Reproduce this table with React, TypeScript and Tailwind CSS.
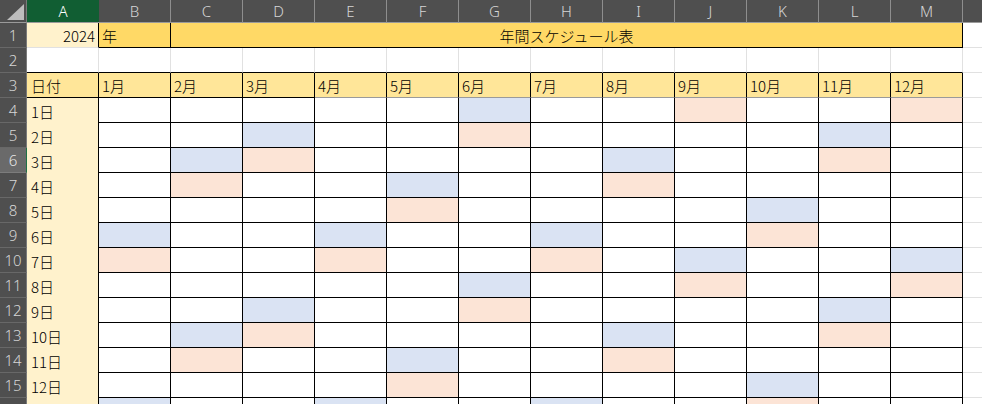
import React from "react";

const letters = ["A", "B", "C", "D", "E", "F", "G", "H", "I", "J", "K", "L", "M"];
const months = Array.from({ length: 12 }, (_, i) => `${i + 1}月`);
const days = Array.from({ length: 13 }, (_, i) => i + 1);

const jp = "font-['Noto_Sans_CJK_JP','Noto_Sans',sans-serif] font-light text-[15px] leading-none text-black";

const RowHead = ({ n, active }: { n: number; active?: boolean }) => (
  <div
    className={`flex items-center justify-center border-b text-[15px] font-['Noto_Sans','Liberation_Sans',sans-serif] font-light ${
      active
        ? "bg-[#6a6a6a] border-b-[#7c7c7c] border-r border-r-[#1e7145] text-[#e8e8e8]"
        : "bg-[#4f4f4f] border-b-[#686868] border-r border-r-[#7a7a7a] text-[#d6d6d6]"
    }`}
  >
    {n}
  </div>
);

const App = () => {
  return (
    <div className="w-full h-[404px] overflow-hidden bg-white">
      <div className="grid grid-cols-[27px_repeat(13,72px)_1fr] grid-rows-[23px_repeat(16,25px)]">
        {/* corner */}
        <div className="relative bg-[#4f4f4f] border-b border-b-[#9a9a9a] border-r border-r-[#7a7a7a]">
          <svg className="absolute left-0 top-0" width="27" height="23" viewBox="0 0 27 23">
            <polygon points="7,20 24,4 24,20" fill="#bdbdbd" />
          </svg>
        </div>
        {/* column headers */}
        {letters.map((l, i) => (
          <div
            key={l}
            className={`flex items-center justify-center border-b text-[15px] font-['Noto_Sans','Liberation_Sans',sans-serif] font-light ${
              i === 0
                ? "bg-[#115e33] text-white border-b-[#9a9a9a]"
                : "bg-[#4f4f4f] text-[#d6d6d6] border-b-[#9a9a9a] border-r border-r-[#8e8e8e]"
            }`}
          >
            {l}
          </div>
        ))}
        <div className="bg-[#4f4f4f] border-b border-b-[#9a9a9a]" />

        {/* row 1 */}
        <RowHead n={1} />
        <div className={`${jp} flex items-center justify-end pr-[3px] pt-px bg-[#fff2cc] border-r border-r-black border-b border-b-[#e1e1e1]`}>
          2024
        </div>
        <div className={`${jp} flex items-center pl-[3px] pt-px bg-[#ffd966] border-r border-r-black border-b border-b-black`}>
          年
        </div>
        <div className={`${jp} col-span-11 flex items-center justify-center pt-px bg-[#ffd966] border-r border-r-black border-b border-b-black`}>
          年間スケジュール表
        </div>
        <div className="border-b border-b-[#e1e1e1]" />

        {/* row 2 */}
        <RowHead n={2} />
        {letters.map((l) => (
          <div key={l} className="border-r border-r-[#e1e1e1] border-b border-b-black" />
        ))}
        <div className="border-b border-b-[#e1e1e1]" />

        {/* row 3 */}
        <RowHead n={3} />
        <div className={`${jp} flex items-center pl-[4px] pt-px bg-[#ffe699] border-r border-r-black border-b border-b-black`}>
          日付
        </div>
        {months.map((m, i) => (
          <div
            key={m}
            className={`${jp} flex items-center pl-[3px] pt-px bg-[#ffe699] border-r border-r-black border-b ${
              i < 3 ? "border-b-black" : "border-b-[#9a9a9a]"
            }`}
          >
            {m}
          </div>
        ))}
        <div className="border-b border-b-[#e1e1e1]" />

        {/* day rows */}
        {days.map((d) => (
          <React.Fragment key={d}>
            <RowHead n={d + 3} active={d === 3} />
            <div className={`${jp} flex items-center pl-[4px] pt-px bg-[#fff2cc] border-r border-r-black`}>
              {d}日
            </div>
            {months.map((m, i) => {
              const wd = new Date(2024, i, d).getDay();
              const bg = wd === 6 ? "bg-[#dae3f3]" : wd === 0 ? "bg-[#fce4d6]" : "bg-white";
              return <div key={m} className={`${bg} border-r border-r-black border-b border-b-black`} />;
            })}
            <div className="border-b border-b-[#e1e1e1]" />
          </React.Fragment>
        ))}
      </div>
    </div>
  );
};

export default App;
